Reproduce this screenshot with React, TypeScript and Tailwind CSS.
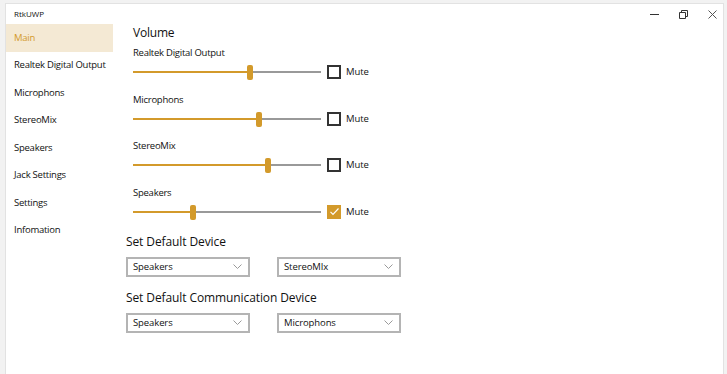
import React from "react";

const GOLD = "bg-[#d39a2b]";

const navItems = [
  "Main",
  "Realtek Digital Output",
  "Microphons",
  "StereoMix",
  "Speakers",
  "Jack Settings",
  "Settings",
  "Infomation",
];

const volumes = [
  { name: "Realtek Digital Output", value: 62, mute: false },
  { name: "Microphons", value: 67, mute: false },
  { name: "StereoMix", value: 72, mute: false },
  { name: "Speakers", value: 32, mute: true },
];

function Slider({ value }: { value: number }) {
  return (
    <div className="relative w-[188px] h-[22px] flex items-center">
      <div className={`h-[2px] ${GOLD}`} style={{ width: `${value}%` }} />
      <div className="h-[2px] flex-1 bg-[#999999]" />
      <div
        className={`absolute top-[4px] w-[6px] h-[15px] rounded-[2px] ${GOLD}`}
        style={{ left: `calc(${value}% - 3px)` }}
      />
    </div>
  );
}

function Checkbox({ checked }: { checked: boolean }) {
  return (
    <div className="flex items-center gap-[5px]">
      {checked ? (
        <div className={`w-[14px] h-[14px] ${GOLD} flex items-center justify-center`}>
          <svg width="11" height="11" viewBox="0 0 11 11">
            <path d="M1.5 5.8 L4 8.3 L9.5 2.5" fill="none" stroke="white" strokeWidth="1.2" />
          </svg>
        </div>
      ) : (
        <div className="w-[14px] h-[14px] border-2 border-[#333333]" />
      )}
      <span className="text-[9.5px] tracking-[-0.1px]">Mute</span>
    </div>
  );
}

function Dropdown({ value }: { value: string }) {
  return (
    <div className="w-[124px] h-[20px] border-2 border-[#b4b4b4] flex items-center justify-between pl-[5px] pr-[6px]">
      <span className="text-[9.5px] tracking-[-0.1px]">{value}</span>
      <svg width="9" height="5" viewBox="0 0 9 5">
        <path d="M0.5 0.5 L4.5 4.5 L8.5 0.5" fill="none" stroke="#9a9a9a" strokeWidth="1" />
      </svg>
    </div>
  );
}

function App() {
  return (
    <div
      className="w-[727px] h-[374px] bg-[#f2f2f2] overflow-hidden pl-[5px] pt-[3px] pr-[3px] text-[#111111]"
      style={{ fontFamily: '"Open Sans", "Noto Sans", sans-serif' }}
    >
      <div className="bg-white h-[400px] border border-[#e2e2e2] flex flex-col">
        <div className="h-[20px] flex items-center justify-between">
          <span className="pl-[8px] text-[8px]">RtkUWP</span>
          <div className="flex items-center gap-[20px] pr-[6px]">
            <div className="w-[9px] h-px bg-[#333333]" />
            <svg width="9" height="9" viewBox="0 0 9 9">
              <path d="M0.5 2.5 H6.5 V8.5 H0.5 Z M2.5 2.5 V0.5 H8.5 V6.5 H6.5" fill="none" stroke="#333" strokeWidth="1" />
            </svg>
            <svg width="9" height="9" viewBox="0 0 9 9">
              <path d="M0.5 0.5 L8.5 8.5 M8.5 0.5 L0.5 8.5" fill="none" stroke="#555" strokeWidth="1" />
            </svg>
          </div>
        </div>
        <div className="flex flex-1">
          <div className="w-[107px] flex flex-col">
            {navItems.map((item, i) => (
              <div
                key={item}
                className={`h-[27.5px] flex items-center pl-[8px] text-[9.5px] tracking-[-0.25px] whitespace-nowrap ${
                  i === 0 ? "bg-[#f4e9d4] text-[#d39a2b]" : ""
                }`}
              >
                {item}
              </div>
            ))}
          </div>
          <div className="flex-1 pl-[13px]">
            <div className="pl-[7px]">
              <div className="h-[18px] leading-[18px] text-[12px] tracking-[-0.2px] mb-[3px]">Volume</div>
              {volumes.map((v) => (
                <div key={v.name} className="h-[46.67px]">
                  <div className="h-[16px] leading-[16px] text-[9.5px] tracking-[-0.25px]">{v.name}</div>
                  <div className="flex items-center gap-[6px]">
                    <Slider value={v.value} />
                    <Checkbox checked={v.mute} />
                  </div>
                </div>
              ))}
            </div>
            <div className="h-[18px] leading-[18px] text-[12px] tracking-[-0.1px] mt-[1px]">Set Default Device</div>
            <div className="flex gap-[27px] mt-[6px]">
              <Dropdown value="Speakers" />
              <Dropdown value="StereoMIx" />
            </div>
            <div className="h-[18px] leading-[18px] text-[12px] tracking-[-0.1px] mt-[12px]">
              Set Default Communication Device
            </div>
            <div className="flex gap-[27px] mt-[6px]">
              <Dropdown value="Speakers" />
              <Dropdown value="Microphons" />
            </div>
          </div>
        </div>
      </div>
    </div>
  );
}

export default App;
